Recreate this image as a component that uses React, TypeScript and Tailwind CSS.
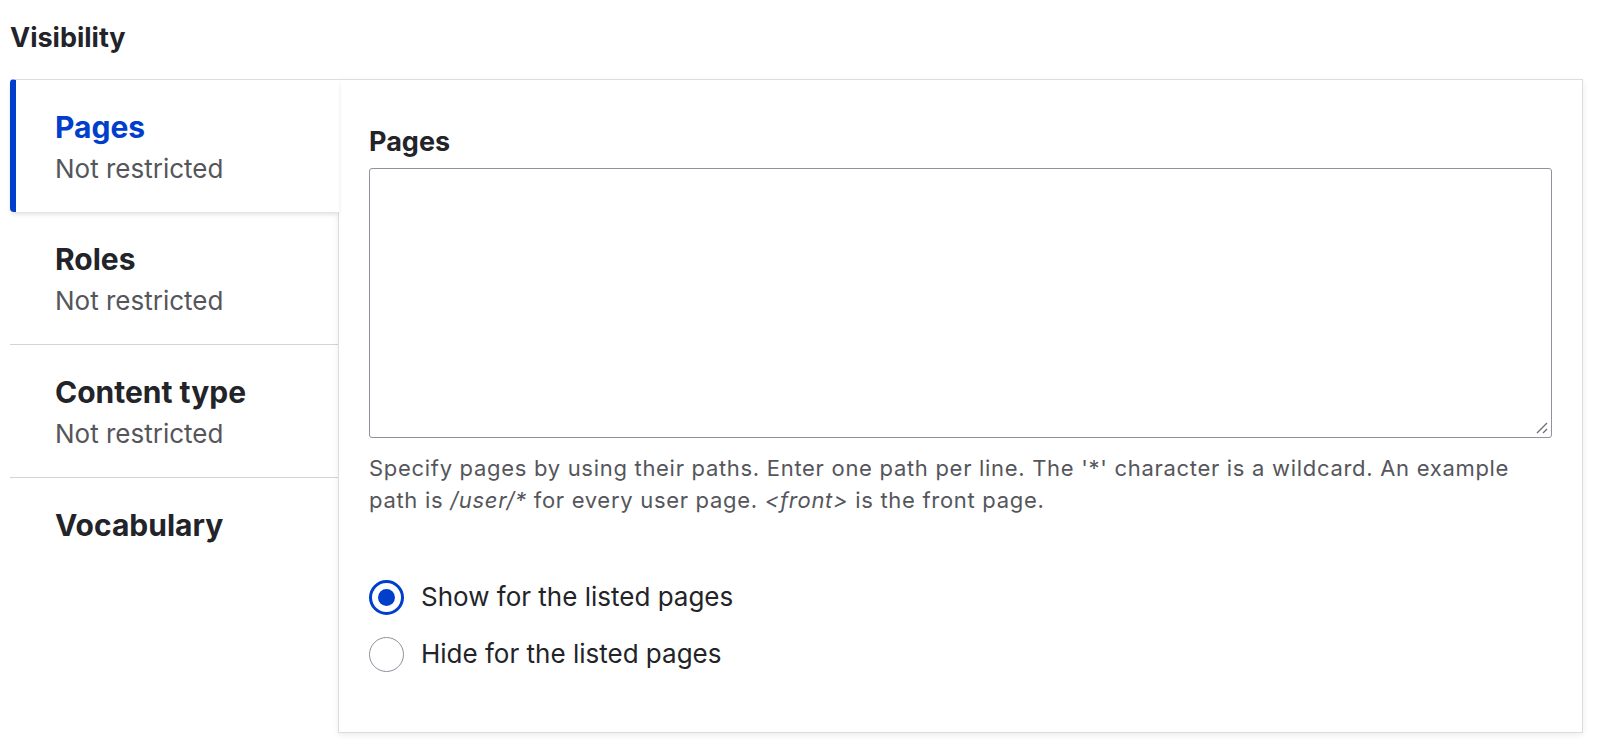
import React, { useState } from 'react';

const tabs = [
  { key: 'pages', title: 'Pages', summary: 'Not restricted' },
  { key: 'roles', title: 'Roles', summary: 'Not restricted' },
  { key: 'content', title: 'Content type', summary: 'Not restricted' },
  { key: 'vocabulary', title: 'Vocabulary', summary: '' },
];

function Radio({ checked, label, onClick }: { checked: boolean; label: string; onClick: () => void }) {
  return (
    <label className="flex items-center gap-[17px] h-[44px] cursor-pointer" onClick={onClick}>
      {checked ? (
        <span className="w-[35px] h-[35px] rounded-full border-[3.5px] border-[#003ecc] flex items-center justify-center shrink-0">
          <span className="w-[17px] h-[17px] rounded-full bg-[#003ecc]" />
        </span>
      ) : (
        <span className="w-[35px] h-[35px] rounded-full border-[1.5px] border-[#8e929c] shrink-0" />
      )}
      <span className="text-[26px] leading-[36px] text-[#232429]">{label}</span>
    </label>
  );
}

export default function App() {
  const [active, setActive] = useState('pages');
  const [mode, setMode] = useState('show');

  return (
    <div className="min-h-screen bg-white pt-[20px] pl-[10px] pr-[15px] font-['Inter',sans-serif] text-[#232429]">
      <h2 className="text-[27px] leading-[36px] font-bold mb-[23px]">Visibility</h2>

      <div className="flex">
        {/* Tab menu */}
        <div className="w-[328px] shrink-0">
          {tabs.map((tab, i) => {
            const isActive = tab.key === active;
            const last = i === tabs.length - 1;
            const nextActive = tabs[i + 1]?.key === active;
            return (
              <button
                key={tab.key}
                onClick={() => setActive(tab.key)}
                className={
                  isActive
                    ? 'relative z-10 block w-[329px] text-left bg-white border-t border-[#dcdde2] border-l-[6px] border-l-[#003ecc] rounded-l-[4px] pl-[39px] pt-[28px] pb-[24px] shadow-[0_3px_5px_-1px_rgba(0,0,0,0.14)]'
                    : 'block w-full text-left pl-[45px] pt-[28px] pb-[24px] ' +
                      (last || isActive || nextActive || i === 0 ? '' : 'border-b border-[#d3d4d9]')
                }
              >
                <div className={'text-[30px] leading-[38px] font-bold ' + (isActive ? 'text-[#003ecc]' : 'text-[#232429]')}>
                  {tab.title}
                </div>
                {tab.summary && (
                  <div className="mt-[4px] text-[26px] leading-[38px] text-[#55565b]">{tab.summary}</div>
                )}
              </button>
            );
          })}
        </div>

        {/* Tab pane */}
        <div className="flex-1 h-[654px] bg-white border border-[#dcdde2] shadow-[0_2px_6px_rgba(0,0,0,0.08)] pt-[44px] px-[30px]">
          <div className="text-[27px] leading-[36px] font-bold mb-[8px]">Pages</div>
          <div className="relative">
            <textarea className="block w-full h-[270px] border border-[#8e929c] rounded-[3px] resize-none outline-none p-3" />
            <svg className="absolute right-[4px] bottom-[4px]" width="14" height="14" viewBox="0 0 14 14">
              <path d="M13 3 L3 13 M13 9 L9 13" stroke="#6b6e76" strokeWidth="1.3" fill="none" />
            </svg>
          </div>
          <p className="mt-[14px] text-[22px] leading-[32px] tracking-[0.7px] text-[#55565b]">
            Specify pages by using their paths. Enter one path per line. The '*' character is a wildcard. An example
            <br />
            path is <em>/user/*</em> for every user page. <em>&lt;front&gt;</em> is the front page.
          </p>

          <div className="mt-[59px] flex flex-col gap-[13px]">
            <Radio checked={mode === 'show'} label="Show for the listed pages" onClick={() => setMode('show')} />
            <Radio checked={mode === 'hide'} label="Hide for the listed pages" onClick={() => setMode('hide')} />
          </div>
        </div>
      </div>
    </div>
  );
}
